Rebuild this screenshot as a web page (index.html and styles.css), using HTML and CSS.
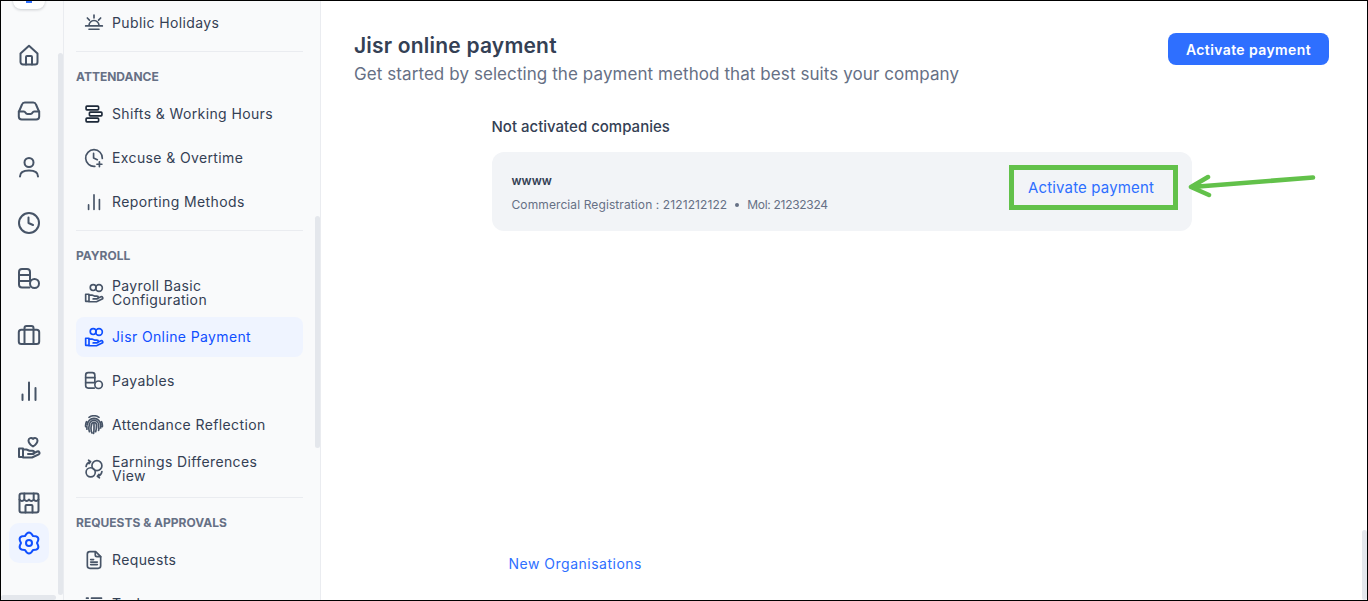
FILE: index.html
```html
<!DOCTYPE html>
<html lang="en">
<head>
    <meta charset="UTF-8">
    <meta name="viewport" content="width=device-width, initial-scale=1.0">
    <title>Jisr online payment</title>
    <link rel="stylesheet" href="styles.css">
</head>
<body>
    <svg class="defs" aria-hidden="true">
        <symbol id="i-home" viewBox="0 0 24 24"><path d="M3.500 10.500 12 2.800l8.500 7.700V19a2.500 2.500 0 0 1-2.500 2.500H6A2.500 2.500 0 0 1 3.500 19z"/><path d="M9 21.500V14a1 1 0 0 1 1-1h4a1 1 0 0 1 1 1v7.500"/></symbol>
        <symbol id="i-inbox" viewBox="0 0 24 24"><path d="M1.800 13 5 5.500A3 3 0 0 1 7.800 3.500h8.400A3 3 0 0 1 19 5.500l3.200 7.500v4.500a3 3 0 0 1-3 3H4.800a3 3 0 0 1-3-3z"/><path d="M1.800 12.500h5c1 0 1.400.6 1.800 1.300.4.800 1 1.200 1.800 1.200h3.200c.8 0 1.400-.4 1.800-1.200.4-.7.8-1.300 1.800-1.300h5"/></symbol>
        <symbol id="i-user" viewBox="0 0 24 24"><circle cx="12" cy="7.500" r="4.500"/><path d="M3 21.500c0-4 3.500-6 9-6s9 2 9 6"/></symbol>
        <symbol id="i-clock" viewBox="0 0 24 24"><circle cx="12" cy="12" r="10"/><path d="M11.500 6.500V12l4.500 2"/></symbol>
        <symbol id="i-coins" viewBox="0 0 24 24"><path d="M12.500 20.500H5a3 3 0 0 1-3-3V5a3 3 0 0 1 3-3h5a3 3 0 0 1 3 3v8"/><path d="M2 8h11M2 14h11"/><circle cx="17.500" cy="16.500" r="4.500"/></symbol>
        <symbol id="i-case" viewBox="0 0 24 24"><rect x="1.800" y="6.800" width="20.400" height="14.200" rx="2.500"/><path d="M7.500 6.800V21M16.500 6.800V21M7.500 6.800V5a2 2 0 0 1 2-2h5a2 2 0 0 1 2 2v1.800"/></symbol>
        <symbol id="i-bars" viewBox="0 0 24 24"><path d="M5.500 15.500v5.500M12 3.500V21M18.500 9v12"/></symbol>
        <symbol id="i-care" viewBox="0 0 24 24"><path d="M2 13.500h4V22H2z"/><path d="M6 14.500h3.500l3 1.200h3a1.700 1.700 0 0 1 0 3.400H11m5-.6 4.300-2a1.600 1.600 0 0 1 1.500 2.800L15 22.500H6"/><path d="M16 11.500s-4.500-2.800-4.500-6A2.500 2.500 0 0 1 16 4a2.500 2.500 0 0 1 4.500 1.500c0 3.200-4.500 6-4.500 6z"/></symbol>
        <symbol id="i-store" viewBox="0 0 24 24"><rect x="2.500" y="2.500" width="19" height="19" rx="2"/><path d="M2.500 8.500c1.500 2 3.300 2 4.800 0 1.500 2 3.300 2 4.700 0 1.400 2 3.200 2 4.700 0 1.500 2 3.300 2 4.800 0M7.300 2.500v6M16.700 2.500v6"/><path d="M8.500 21.500V15a1 1 0 0 1 1-1h5a1 1 0 0 1 1 1v6.500"/></symbol>
        <symbol id="i-gear" viewBox="0 0 24 24"><path d="M8 5.070Q12-2 16 5.070 24.100 5 20 12 24.100 19 16 18.930 12 26 8 18.930-.1 19 4 12-.1 5 8 5.070z"/><circle cx="12" cy="12" r="3"/></symbol>
        <symbol id="i-sun" viewBox="0 0 24 24"><path d="M6 15a6 6 0 0 1 12 0M2 15.500h20M6 19.500h12M12 2.500v3.500M4 6l2.500 2.500M20 6l-2.500 2.500"/></symbol>
        <symbol id="i-shifts" viewBox="0 0 24 24"><rect x="2.500" y="2.500" width="15" height="4.500" rx="1"/><rect x="6.500" y="9.700" width="15" height="4.500" rx="1"/><rect x="2.500" y="17" width="15" height="4.500" rx="1"/></symbol>
        <symbol id="i-excuse" viewBox="0 0 24 24"><path d="M13 22A10 10 0 1 1 22 12.500"/><path d="M11.500 6.500V12l4.500 2M18.500 16.500v6M15.500 19.500h6"/></symbol>
        <symbol id="i-coinhand" viewBox="0 0 24 24"><path d="M2 13.500h4V22H2z"/><path d="M6 14.500h3.500l3 1.200h3a1.700 1.700 0 0 1 0 3.400H11m5-.6 4.300-2a1.600 1.600 0 0 1 1.500 2.800L15 22.500H6"/><circle cx="11" cy="5.500" r="3.500"/><circle cx="18" cy="6" r="4"/></symbol>
        <symbol id="i-finger" viewBox="0 0 24 24"><path d="M4 12a8 8 0 0 1 16 0M2 14a10 10 0 0 1 1-6M22 14a10 10 0 0 0-1-6M6.500 20A12 12 0 0 1 6.500 12a5.500 5.500 0 0 1 11 0v4M9.500 21.500A14 14 0 0 1 9 12a3 3 0 0 1 6 0c0 3 0 5-1 8M12 11c0 4 .3 7-.5 11M6 2.800a11 11 0 0 1 12 0M17.500 18.500l.5-2.500M20 15.500V13M3.500 17V14"/></symbol>
        <symbol id="i-swap" viewBox="0 0 24 24"><circle cx="15.500" cy="8" r="6"/><circle cx="8" cy="16" r="5.500"/><path d="M2.500 9c.5-3 2.500-5 5-5.500M5.500 1.500 8 3.200 6 5.500M21.500 15c-.5 3-2.500 5-5 5.500M18.500 22.500 16 20.800l2-2.300"/></symbol>
        <symbol id="i-doc" viewBox="0 0 24 24"><path d="M14 2H7a3 3 0 0 0-3 3v14a3 3 0 0 0 3 3h10a3 3 0 0 0 3-3V8z"/><path d="M13.500 2.500V6a2 2 0 0 0 2 2H20M8 11.500h3.500M8 14.500h8M8 17.500h8"/></symbol>
        <symbol id="i-list" viewBox="0 0 24 24"><path d="M9 5h12M9 12h12M9 19h12M3 5h2M3 12h2M3 19h2"/></symbol>
    </svg>

    <div class="page">
        <nav class="rail">
            <div class="rail-logo"><i class="rail-mark"></i></div>
            <a class="rail-item"><svg class="ico-lg"><use href="#i-home"/></svg></a>
            <a class="rail-item"><svg class="ico-lg"><use href="#i-inbox"/></svg></a>
            <a class="rail-item"><svg class="ico-lg"><use href="#i-user"/></svg></a>
            <a class="rail-item"><svg class="ico-lg"><use href="#i-clock"/></svg></a>
            <a class="rail-item"><svg class="ico-lg"><use href="#i-coins"/></svg></a>
            <a class="rail-item"><svg class="ico-lg"><use href="#i-case"/></svg></a>
            <a class="rail-item"><svg class="ico-lg"><use href="#i-bars"/></svg></a>
            <a class="rail-item"><svg class="ico-lg"><use href="#i-care"/></svg></a>
            <a class="rail-item"><svg class="ico-lg"><use href="#i-store"/></svg></a>
            <a class="rail-item active"><svg class="ico-lg"><use href="#i-gear"/></svg></a>
            <span class="thumb thumb-rail"></span>
            <span class="thumb thumb-rail-x"></span>
        </nav>

        <aside class="sidebar">
            <a class="side-item"><svg class="ico"><use href="#i-sun"/></svg><span>Public Holidays</span></a>
            <hr class="side-line">
            <h4 class="side-title">ATTENDANCE</h4>
            <a class="side-item"><svg class="ico dark"><use href="#i-shifts"/></svg><span>Shifts &amp; Working Hours</span></a>
            <a class="side-item"><svg class="ico"><use href="#i-excuse"/></svg><span>Excuse &amp; Overtime</span></a>
            <a class="side-item"><svg class="ico"><use href="#i-bars"/></svg><span>Reporting Methods</span></a>
            <hr class="side-line">
            <h4 class="side-title">PAYROLL</h4>
            <a class="side-item"><svg class="ico"><use href="#i-coinhand"/></svg><span>Payroll Basic<br>Configuration</span></a>
            <a class="side-item active"><svg class="ico"><use href="#i-coinhand"/></svg><span>Jisr Online Payment</span></a>
            <a class="side-item"><svg class="ico"><use href="#i-coins"/></svg><span>Payables</span></a>
            <a class="side-item"><svg class="ico"><use href="#i-finger"/></svg><span>Attendance Reflection</span></a>
            <a class="side-item"><svg class="ico"><use href="#i-swap"/></svg><span>Earnings Differences<br>View</span></a>
            <hr class="side-line">
            <h4 class="side-title">REQUESTS &amp; APPROVALS</h4>
            <a class="side-item"><svg class="ico"><use href="#i-doc"/></svg><span>Requests</span></a>
            <a class="side-item"><svg class="ico"><use href="#i-list"/></svg><span>Tasks</span></a>
            <span class="thumb thumb-side"></span>
        </aside>

        <main class="main">
            <div class="top">
                <div>
                    <h1 class="title">Jisr online payment</h1>
                    <p class="subtitle">Get started by selecting the payment method that best suits your company</p>
                </div>
                <button class="btn-primary">Activate payment</button>
            </div>

            <section class="companies">
                <h3 class="companies-title">Not activated companies</h3>
                <div class="card">
                    <div class="card-info">
                        <div class="card-name">wwww</div>
                        <div class="card-meta">
                            <span class="card-reg">Commercial Registration : 2121212122</span>
                            <i class="dot"></i>
                            <span class="card-mol">Mol: 21232324</span>
                        </div>
                    </div>
                    <a class="btn-link">Activate payment</a>
                </div>
                <a class="new-org">New Organisations</a>
            </section>

            <svg class="arrow" width="134" height="30" viewBox="0 0 134 30">
                <path d="M125 4.500 4 14M20 4 3 14 21 22"/>
            </svg>
            <span class="thumb thumb-main"></span>
        </main>
    </div>
</body>
</html>
```

FILE: styles.css
```css
* {
    box-sizing: border-box;
}
body {
    margin: 0;
    height: 601px;
    overflow: hidden;
    font-family: Inter, "Open Sans", sans-serif;
    color: #344054;
    background: #fff;
}
.defs {
    display: none;
}
svg {
    fill: none;
    stroke: currentColor;
    stroke-width: 2;
    stroke-linecap: round;
    stroke-linejoin: round;
}
.ico-lg {
    width: 24px;
    height: 24px;
}
.ico {
    width: 20px;
    height: 20px;
    flex: none;
    color: #475467;
}
.ico.dark {
    color: #1d2939;
}
.page {
    display: flex;
    height: 601px;
    border: 1px solid #000;
    overflow: hidden;
}

/* icon rail */
.rail {
    position: relative;
    width: 63px;
    flex: none;
    display: flex;
    flex-direction: column;
    padding-left: 8px;
    background: #f9fafb;
    border-right: 1px solid #eaecf0;
    overflow: hidden;
}
.rail-logo {
    width: 32px;
    height: 32px;
    margin: -24px 0 26px 4px;
    display: flex;
    align-items: flex-end;
    justify-content: center;
    padding-bottom: 6px;
    background: #fff;
    border-radius: 8px;
    box-shadow: 0 1px 3px rgba(16,24,40,0.2);
}
.rail-mark {
    width: 6px;
    height: 3px;
    background: #2e6fff;
}
.rail-item {
    width: 40px;
    height: 40px;
    margin-bottom: 16px;
    display: flex;
    align-items: center;
    justify-content: center;
    color: #475467;
    border-radius: 10px;
    flex: none;
}
.rail-item:nth-last-of-type(2) {
    margin-bottom: 0;
}
.rail-item.active {
    color: #0f4fff;
    background: #eff4ff;
}

/* overlay scrollbars */
.thumb {
    position: absolute;
    background: #e4e7ec;
    border-radius: 3px;
}
.thumb-rail {
    left: 57px;
    top: 52px;
    width: 5px;
    height: 542px;
}
.thumb-rail-x {
    left: 0;
    bottom: 0;
    width: 55px;
    height: 5px;
}
.thumb-side {
    right: 0;
    top: 215px;
    width: 5px;
    height: 232px;
}
.thumb-main {
    right: 0;
    bottom: 0;
    width: 5px;
    height: 70px;
}

/* section sidebar */
.sidebar {
    position: relative;
    width: 257px;
    flex: none;
    padding: 2px 17px 0 12px;
    background: #f9fafb;
    border-right: 1px solid #eaecf0;
    overflow: hidden;
}
.side-item {
    display: flex;
    align-items: center;
    gap: 8px;
    height: 40px;
    margin-bottom: 4px;
    padding-left: 8px;
    border-radius: 8px;
    font-size: 14px;
    line-height: 14px;
    font-weight: 400;
    letter-spacing: 0.38px;
    color: #344054;
}
.side-item.active {
    color: #0f4fff;
    background: #eff4ff;
}
.side-item.active .ico {
    color: #0f4fff;
}
.side-line {
    height: 1px;
    margin: 8px 0 0;
    border: 0;
    background: #eaecf0;
}
.side-title {
    margin: 18px 0 10px;
    font-size: 12px;
    line-height: 14px;
    font-weight: 700;
    color: #667085;
}

/* main content */
.main {
    position: relative;
    flex: 1;
    padding: 32px 38px 0 33px;
    background: #fff;
}
.top {
    display: flex;
    justify-content: space-between;
    align-items: flex-start;
}
.title {
    margin: -1px 0 2px;
    font-size: 21px;
    line-height: 28px;
    font-weight: 600;
    letter-spacing: 0.2px;
    color: #344054;
}
.subtitle {
    margin: 0;
    font-size: 17px;
    line-height: 24px;
    letter-spacing: 0.08px;
    color: #667085;
}
.btn-primary {
    width: 161px;
    height: 32px;
    border: 0;
    border-radius: 8px;
    font-family: inherit;
    font-size: 14px;
    font-weight: 600;
    letter-spacing: 0.4px;
    color: #fff;
    background: #2e6fff;
}
.companies {
    width: 700px;
    margin: 31px auto 0;
}
.companies-title {
    margin: 0 0 15px;
    font-size: 15px;
    line-height: 20px;
    font-weight: 500;
    color: #344054;
}
.card {
    height: 79px;
    display: flex;
    align-items: center;
    justify-content: space-between;
    padding: 0 14px 0 20px;
    background: #f2f4f7;
    border-radius: 12px;
}
.card-info {
    padding-top: 2px;
}
.card-name {
    font-size: 12px;
    line-height: 18px;
    font-weight: 600;
    color: #344054;
}
.card-meta {
    display: flex;
    align-items: center;
    gap: 8px;
    margin-top: 6px;
    font-size: 12px;
    line-height: 18px;
    color: #667085;
}
.card-reg {
    letter-spacing: 0.1px;
}
.card-mol {
    letter-spacing: -0.3px;
}
.dot {
    width: 4px;
    height: 4px;
    border-radius: 50%;
    background: #667085;
}
.btn-link {
    width: 169px;
    height: 45px;
    margin-bottom: 8px;
    padding-right: 4px;
    display: flex;
    align-items: center;
    justify-content: center;
    border: 5px solid #62c14a;
    font-size: 15px;
    font-weight: 400;
    letter-spacing: 0.15px;
    color: #2e6fff;
}
.new-org {
    display: block;
    margin: 323px 0 0 17px;
    font-size: 14px;
    line-height: 20px;
    font-weight: 400;
    letter-spacing: 0.5px;
    color: #2e6fff;
}

/* green callout arrow on the screenshot */
.arrow {
    position: absolute;
    left: 867px;
    top: 172px;
    color: #62c14a;
    stroke-width: 4.5;
}
```
